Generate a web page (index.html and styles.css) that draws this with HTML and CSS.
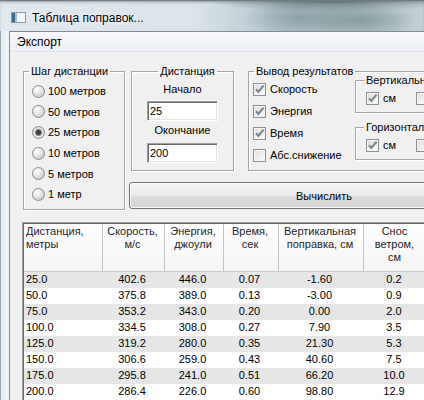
FILE: index.html
```html
<!DOCTYPE html>
<html lang="ru">
<head>
<meta charset="utf-8">
<title>Таблица поправок</title>
<link rel="stylesheet" href="styles.css">
</head>
<body>
<div class="window">
  <div class="titlebar">
    <svg class="app-icon" width="15" height="11" viewBox="0 0 15 11">
      <rect x="0.5" y="0.5" width="14" height="10" fill="#f4f6f8" stroke="#8c98a2"/>
      <rect x="1" y="1" width="3" height="9" fill="#3d6d8f"/>
      <rect x="4" y="1" width="2" height="9" fill="#9fc0d6"/>
    </svg>
    <span class="title">Таблица поправок...</span>
  </div>
  <div class="frame">
    <div class="client">
      <div class="menubar"><span class="menu-item">Экспорт</span></div>
      <div class="content">
        <div class="top">
          <fieldset class="group g-step">
            <legend>Шаг дистанции</legend>
            <div class="radio-list">
              <div class="radio"><span class="rb"></span>100 метров</div>
              <div class="radio"><span class="rb"></span>50 метров</div>
              <div class="radio"><span class="rb on"></span>25 метров</div>
              <div class="radio"><span class="rb"></span>10 метров</div>
              <div class="radio"><span class="rb"></span>5 метров</div>
              <div class="radio"><span class="rb"></span>1 метр</div>
            </div>
          </fieldset>
          <div class="right-col">
            <div class="groups-row">
              <fieldset class="group g-dist">
                <legend>Дистанция</legend>
                <div class="field-label">Начало</div>
                <div class="input">25</div>
                <div class="field-label second">Окончание</div>
                <div class="input second">200</div>
              </fieldset>
              <fieldset class="group g-out">
                <legend>Вывод результатов</legend>
                <div class="out-body">
                  <div class="check-list">
                    <div class="check"><span class="cb"><svg viewBox="0 0 11 11" width="11" height="11"><path d="M2 5.2 L4.4 7.8 L9.6 1.6" fill="none" stroke="#7d8a8c" stroke-width="2.2"/></svg></span>Скорость</div>
                    <div class="check"><span class="cb"><svg viewBox="0 0 11 11" width="11" height="11"><path d="M2 5.2 L4.4 7.8 L9.6 1.6" fill="none" stroke="#7d8a8c" stroke-width="2.2"/></svg></span>Энергия</div>
                    <div class="check"><span class="cb"><svg viewBox="0 0 11 11" width="11" height="11"><path d="M2 5.2 L4.4 7.8 L9.6 1.6" fill="none" stroke="#7d8a8c" stroke-width="2.2"/></svg></span>Время</div>
                    <div class="check"><span class="cb"></span>Абс.снижение</div>
                  </div>
                  <div class="sub-col">
                    <fieldset class="group sub">
                      <legend>Вертикальная</legend>
                      <div class="sub-row">
                        <div class="check"><span class="cb"><svg viewBox="0 0 11 11" width="11" height="11"><path d="M2 5.2 L4.4 7.8 L9.6 1.6" fill="none" stroke="#7d8a8c" stroke-width="2.2"/></svg></span>см</div>
                        <div class="check"><span class="cb"></span></div>
                      </div>
                    </fieldset>
                    <fieldset class="group sub sub2">
                      <legend>Горизонтальная</legend>
                      <div class="sub-row">
                        <div class="check"><span class="cb"><svg viewBox="0 0 11 11" width="11" height="11"><path d="M2 5.2 L4.4 7.8 L9.6 1.6" fill="none" stroke="#7d8a8c" stroke-width="2.2"/></svg></span>см</div>
                        <div class="check"><span class="cb"></span></div>
                      </div>
                    </fieldset>
                  </div>
                </div>
              </fieldset>
            </div>
            <button class="btn">Вычислить</button>
          </div>
        </div>
        <div class="listview">
          <div class="lv-inner">
            <div class="lv-row lv-head">
              <div class="th left">Дистанция,<br>метры</div>
              <div class="th">Скорость,<br>м/с</div>
              <div class="th">Энергия,<br>джоули</div>
              <div class="th">Время,<br>сек</div>
              <div class="th">Вертикальная<br>поправка, см</div>
              <div class="th">Снос<br>ветром,<br>см</div>
            </div>
            <div class="lv-row alt"><div class="td left">25.0</div><div class="td">402.6</div><div class="td">446.0</div><div class="td">0.07</div><div class="td">-1.60</div><div class="td">0.2</div></div>
            <div class="lv-row"><div class="td left">50.0</div><div class="td">375.8</div><div class="td">389.0</div><div class="td">0.13</div><div class="td">-3.00</div><div class="td">0.9</div></div>
            <div class="lv-row alt"><div class="td left">75.0</div><div class="td">353.2</div><div class="td">343.0</div><div class="td">0.20</div><div class="td">0.00</div><div class="td">2.0</div></div>
            <div class="lv-row"><div class="td left">100.0</div><div class="td">334.5</div><div class="td">308.0</div><div class="td">0.27</div><div class="td">7.90</div><div class="td">3.5</div></div>
            <div class="lv-row alt"><div class="td left">125.0</div><div class="td">319.2</div><div class="td">280.0</div><div class="td">0.35</div><div class="td">21.30</div><div class="td">5.3</div></div>
            <div class="lv-row"><div class="td left">150.0</div><div class="td">306.6</div><div class="td">259.0</div><div class="td">0.43</div><div class="td">40.60</div><div class="td">7.5</div></div>
            <div class="lv-row alt"><div class="td left">175.0</div><div class="td">295.8</div><div class="td">241.0</div><div class="td">0.51</div><div class="td">66.20</div><div class="td">10.0</div></div>
            <div class="lv-row"><div class="td left">200.0</div><div class="td">286.4</div><div class="td">226.0</div><div class="td">0.60</div><div class="td">98.80</div><div class="td">12.9</div></div>
          </div>
        </div>
      </div>
    </div>
  </div>
</div>
</body>
</html>
```
FILE: styles.css
```css
html, body {
  margin: 0;
  padding: 0;
}
body {
  width: 424px;
  height: 400px;
  overflow: hidden;
  font-family: "Liberation Sans", Arial, sans-serif;
  font-size: 11px;
  color: #000;
}
.window {
  width: 424px;
  height: 400px;
  overflow: hidden;
  display: flex;
  flex-direction: column;
  background:
    radial-gradient(ellipse 60px 18px at 300px 18px, rgba(115,140,148,0.6), rgba(115,140,148,0) 100%),
    radial-gradient(ellipse 55px 16px at 362px 20px, rgba(105,135,130,0.6), rgba(105,135,130,0) 100%),
    radial-gradient(ellipse 120px 10px at 330px 2px, rgba(70,85,90,0.55), rgba(70,85,90,0) 100%),
    linear-gradient(to right, #e1e8ed 0%, #dbe4ea 45%, #c6d3da 57%, #b2c3c9 68%, #a9bcbe 80%, #b7c6ca 92%, #c4d0d4 100%);
}
.titlebar {
  height: 31px;
  flex: none;
  box-sizing: border-box;
  padding: 3px 0 0 11px;
  display: flex;
  align-items: center;
  gap: 6px;
  border-top: 1px solid #6f7b81;
  box-shadow: inset 0 2px 3px -1px rgba(60,72,78,0.45);
}
.app-icon {
  flex: none;
  display: block;
}
.title {
  font-size: 12px;
  color: #000;
  text-shadow: 0 0 6px rgba(255,255,255,0.95), 0 0 3px rgba(255,255,255,0.9);
}
.frame {
  flex: 1;
  padding-left: 9px;
  background: linear-gradient(to right, #9aa7b0 0, #9aa7b0 1px, #e6edf2 1px, #eef3f7 9px, transparent 9px);
}
.client {
  width: 560px;
  height: 100%;
  box-sizing: border-box;
  border-left: 1px solid #7f8c95;
  border-top: 1px solid #7f8c95;
  background: #f0f0f0;
}
.menubar {
  height: 20px;
  box-sizing: border-box;
  padding-left: 7px;
  display: flex;
  align-items: center;
  background: linear-gradient(#f8f9fb, #eceff3);
  border-bottom: 1px solid #dfe3e8;
}
.menu-item {
  font-size: 12px;
}
.content {
  padding: 12px 0 0 12px;
}
.top {
  display: flex;
  align-items: flex-start;
}
.group {
  margin: 0;
  padding: 0;
  min-width: 0;
  border: 1px solid #a3a3a3;
  box-shadow: inset 1px 1px 0 #ffffff, 1px 1px 0 #ffffff;
}
.group legend {
  margin-left: 5px;
  padding: 0 2px;
  line-height: 14px;
  height: 14px;
  font-size: 11px;
  white-space: nowrap;
}
.g-step {
  width: 102px;
  box-sizing: border-box;
  margin-left: 1px;
  margin-right: 5px;
  flex: none;
}
.radio-list {
  padding: 3px 0 4px 8px;
}
.radio {
  height: 20.6px;
  display: flex;
  align-items: center;
  gap: 3px;
  white-space: nowrap;
}
.rb {
  flex: none;
  width: 13px;
  height: 13px;
  box-sizing: border-box;
  border-radius: 50%;
  border: 1px solid #8a8a8a;
  background: radial-gradient(circle at 35% 30%, #ffffff 0, #ececec 35%, #bdbdbd 100%);
}
.rb.on {
  background: radial-gradient(circle at 50% 50%, #383838 0, #4a4a4a 2.3px, #a0a0a0 3.3px, #eeeeee 4.2px, #d2d2d2 6px);
}
.right-col {
  display: flex;
  flex-direction: column;
  align-items: flex-start;
}
.groups-row {
  display: flex;
  align-items: flex-start;
  margin-left: 1px;
}
.g-dist {
  width: 103px;
  box-sizing: border-box;
  flex: none;
  text-align: center;
  padding-bottom: 7px;
}
.field-label {
  line-height: 14px;
  margin-top: 4px;
}
.field-label.second {
  margin-top: 2px;
}
.input {
  width: 71px;
  height: 20px;
  box-sizing: border-box;
  margin: 5px auto 0;
  text-align: left;
  padding: 2px 0 0 2px;
  line-height: 14px;
  background: #fff;
  border: 1px solid;
  border-color: #a0a0a0 #ffffff #ffffff #a0a0a0;
  box-shadow: inset 1px 1px 0 #696969, inset -1px -1px 0 #e3e3e3;
}
.input.second {
  margin-top: 6px;
}
.g-out {
  width: 240px;
  box-sizing: border-box;
  flex: none;
  margin-left: 14px;
}
.out-body {
  display: flex;
  align-items: flex-start;
  padding: 0 0 4px 4px;
}
.check-list {
  width: 102px;
  flex: none;
}
.check {
  height: 22px;
  display: flex;
  align-items: center;
  gap: 4px;
  white-space: nowrap;
}
.cb {
  flex: none;
  width: 13px;
  height: 13px;
  box-sizing: border-box;
  border: 1px solid #8e8f8f;
  background: linear-gradient(135deg, #dcdcdc 0%, #f0f0f0 60%, #fbfbfb 100%);
  box-shadow: inset 0 0 0 1px #f6f6f6;
  display: flex;
  align-items: center;
  justify-content: center;
}
.cb svg {
  display: block;
}
.sub-col {
  margin-top: -5px;
}
.sub {
  width: 130px;
  box-sizing: border-box;
  padding: 1px 0 4px 10px;
}
.sub legend {
  margin-left: -2px;
}
.sub2 {
  margin-top: 7px;
}
.sub-row {
  display: flex;
  gap: 20px;
}
.sub-row .check {
  height: 20px;
  gap: 4px;
}
.btn {
  margin: 11px 0 0 -1px;
  width: 390px;
  height: 27px;
  box-sizing: border-box;
  padding: 0;
  border: 1px solid #707070;
  border-radius: 3px;
  background: linear-gradient(#f3f3f3 0%, #ebebeb 48%, #dddddd 52%, #d3d3d3 100%);
  box-shadow: inset 0 0 0 1px #fcfcfc;
  font-family: "Liberation Sans", Arial, sans-serif;
  font-size: 11px;
  color: #000;
}
.listview {
  margin-top: 12px;
  width: 440px;
  border: 1px solid;
  border-color: #a0a0a0 #ffffff #ffffff #a0a0a0;
}
.lv-inner {
  border: 1px solid;
  border-color: #696969 #e3e3e3 #e3e3e3 #696969;
  background: #fff;
}
.lv-row {
  display: grid;
  grid-template-columns: 79px 62px 59px 55px 85px 64px;
  height: 16px;
}
.lv-row.alt {
  background: #e6e6e6;
}
.lv-head {
  height: 48px;
  box-sizing: border-box;
  border-bottom: 1px solid #c9c9c9;
  background: linear-gradient(#ffffff, #f4f4f4);
}
.th {
  box-sizing: border-box;
  border-right: 1px solid #c4c4c4;
  padding: 1px 4px 0 2px;
  line-height: 13px;
  text-align: center;
  color: #1f1f1f;
}
.td {
  line-height: 15px;
  padding-right: 4px;
  text-align: center;
  white-space: nowrap;
}
.th.left, .td.left {
  text-align: left;
  padding-left: 2px;
}
```
